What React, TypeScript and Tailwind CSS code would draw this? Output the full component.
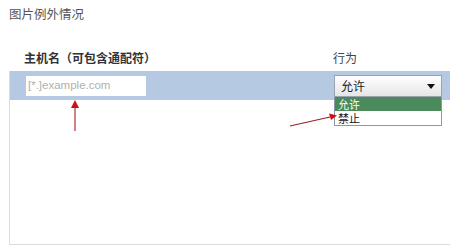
import React from "react";

export default function App() {
  return (
    <div
      className="relative w-[450px] h-[245px] overflow-hidden bg-white"
      style={{ fontFamily: '"Noto Sans CJK SC", "Noto Sans", sans-serif' }}
    >
      <div className="pl-[9px] pt-[5px] text-[12.5px] leading-[18px] text-[#555]">图片例外情况</div>
      <div className="flex pt-[27px] text-[12px] leading-[16px] text-[#333]">
        <div className="w-[333px] pl-[24px] font-bold">主机名（可包含通配符）</div>
        <div className="text-[#444]">行为</div>
      </div>
      <div className="ml-[9px] mt-[5px] h-[174px] border-l border-b border-[#dcdcdc]">
        <div className="relative flex h-[29px] items-center bg-[#b6c9e3]">
          <div className="ml-[16px] flex h-[20px] w-[120px] items-center bg-white pl-[2px] text-[11.5px] text-[#b0b0b0]" style={{ fontFamily: '"Liberation Sans", Arial, sans-serif' }}>
            [*.]example.com
          </div>
          <div className="absolute left-[324px] top-[4px] w-[108px]">
            <div className="flex h-[22px] items-center justify-between border border-[#9aa3ad] bg-gradient-to-b from-white to-[#e6e6e6] pl-[6px] pr-[6px] text-[12px] text-[#222]">
              <span>允许</span>
              <svg width="8" height="5" viewBox="0 0 8 5"><path d="M0 0h8L4 5z" fill="#111" /></svg>
            </div>
            <div className="flex flex-col border border-t-0 border-[#8a98a8] bg-white text-[11px]">
              <div className="flex h-[14px] items-center overflow-hidden bg-[#4b8a5a] pl-[3px] leading-[13px] text-white">允许</div>
              <div className="flex h-[14px] items-center overflow-hidden pl-[3px] leading-[13px] text-[#111]">禁止</div>
            </div>
          </div>
        </div>
      </div>
      <svg className="absolute left-0 top-0 pointer-events-none" width="450" height="245">
        <line x1="75" y1="107" x2="75" y2="131" stroke="#b03030" strokeWidth="1.2" />
        <path d="M75 100 L71 108 L79 108 Z" fill="#d01010" />
        <line x1="290" y1="126" x2="330" y2="117" stroke="#9a2020" strokeWidth="1.2" />
        <path d="M337 115.5 L329 113.5 L331 120 Z" fill="#d01010" />
      </svg>
    </div>
  );
}
